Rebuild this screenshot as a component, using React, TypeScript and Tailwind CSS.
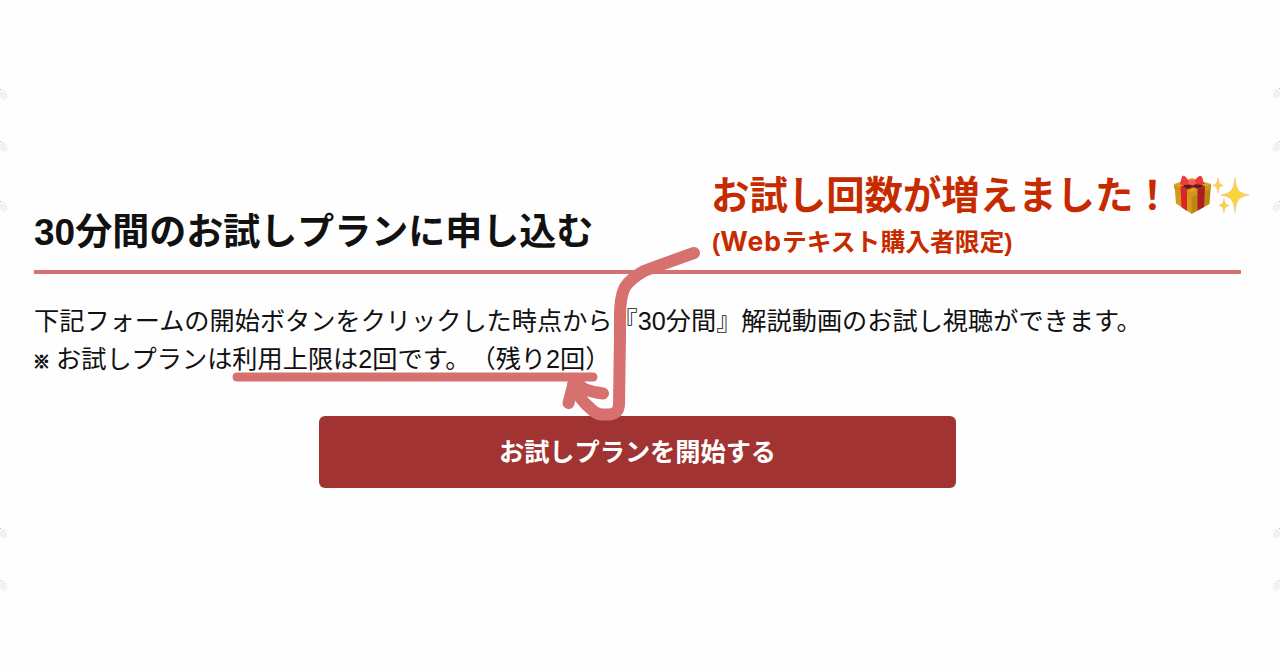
import { clsx } from "clsx";

const MARK = "#d6716f";

const specks = [
  { side: "left", top: "top-[89px]" },
  { side: "left", top: "top-[141px]" },
  { side: "left", top: "top-[201px]" },
  { side: "left", top: "top-[528px]" },
  { side: "left", top: "top-[580px]" },
  { side: "right", top: "top-[88px]" },
  { side: "right", top: "top-[141px]" },
  { side: "right", top: "top-[201px]" },
  { side: "right", top: "top-[528px]" },
  { side: "right", top: "top-[580px]" },
];

function Speck({ side, top }: { side: string; top: string }) {
  return (
    <svg
      width="9"
      height="13"
      viewBox="0 0 9 13"
      shapeRendering="crispEdges"
      className={clsx("absolute", top, side === "left" ? "left-0" : "right-0 -scale-x-100")}
    >
      <path d="M1 1h4v2h2v1h-1v1h2v1h-1v2h1v1h-2v1h-1v2h-1v-1h-1v-1h-1v-1h-2V3h1z" fill="#f5f1f1" />
      <rect width="1" height="1" fill="#bdb9b9" />
    </svg>
  );
}

function GiftIcon() {
  return (
    <svg width="40" height="40" viewBox="0 0 40 40" className="shrink-0">
      <path d="M2.500 10 20 17v22L4 28.500z" fill="#d49b18" />
      <path d="M19.500 17 39 9l-1.500 20L19.500 39z" fill="#bd8514" />
      <path d="M2 9 20 3l19 6-19.500 9z" fill="#dca41f" />
      <path d="M2 9l17.500 8.500L39 9v4.500l-19.500 8.500L2 13.500z" fill="#cf9619" />
      <path d="M8.500 11.500 15 15v21l-5.500-3.800z" fill="#d9252a" />
      <path d="M25.500 14.500 33 11l-1 21-6.500 3.500z" fill="#ac1d22" />
      <path d="M8.500 11.500 28 6l5 2.500L15 15zM13 7l5-1.500 15 5.500-7.500 3.500z" fill="#c82228" />
      <path d="M11 11c4-3 7-2 9 0 3-2 8-2 11 .5l-4 1.500-6-1.500-6 2z" fill="#42242b" />
      <path d="M18 9C15 2 12 0 10.500 1 9.500 3 8 7 8.500 9.500c3 1 7 .5 9.500-.5z" fill="#f0383d" />
      <path d="M22 8c2-6 6-8 7.500-6.500C31 3 31.500 6 31 9c-3 1-7 .5-9-1z" fill="#f0383d" />
      <path d="M16.500 5h6.500l1 4-3.500 1.500L16 9z" fill="#ff5858" />
    </svg>
  );
}

function SparklesIcon() {
  return (
    <svg width="38" height="38" viewBox="0 0 38 38" className="shrink-0" fill="#fbd43c" stroke="#efb98a" strokeWidth="0.6">
      <path d="M23 1.500c1.200 12.500 3.500 15.500 14 17.500-10.500 2-12.800 5-14 17.500C21.800 24 19.500 21 9 19c10.500-2 12.800-5 14-17.500z" />
      <path d="M6 2c.8 5 1.600 6.500 5 7.300C7.600 10.200 6.800 12 6 17 5.200 12 4.400 10.200 1 9.300 4.400 8.500 5.200 7 6 2z" />
      <path d="M12 22.500c.8 4.800 1.600 6 5 6.800-3.400.9-4.200 2.500-5 7.200-.8-4.700-1.600-6.300-5-7.200 3.400-.8 4.200-2 5-6.800z" />
    </svg>
  );
}

// Hand-drawn underline and arrow laid over the form
function Scribble() {
  return (
    <svg
      width="1280"
      height="670"
      viewBox="0 0 1280 670"
      fill="none"
      stroke={MARK}
      strokeLinecap="round"
      strokeLinejoin="round"
      className="pointer-events-none absolute top-0 left-0"
    >
      <path d="M237 377H593" strokeWidth="9" />
      <path
        d="M694 253C677 259 660 265 644 271C637 275 629 281 625 287C619 299 620 316 620 335L619 404Q619 414 609 414.500H601Q596 414 590 408Q580 400 573 385"
        strokeWidth="12"
      />
      <path d="M568.500 403L574 382Q582 391 603 393.500" strokeWidth="12" />
      <path d="M571 381h10l10 10-15 2z" fill={MARK} strokeWidth="4" />
    </svg>
  );
}

export default function App() {
  return (
    <div className="relative h-[670px] w-[1280px] overflow-hidden bg-[#fefefe] font-['Liberation_Sans','Noto_Sans_CJK_JP',sans-serif] text-[#111] [text-spacing-trim:space-all]">
      <main className="w-[1241px] pt-[172px] pl-[34px]">
        <header className="flex h-[102px] justify-between border-b-4 border-[#d6716f] whitespace-nowrap">
          <h1 className="mt-[39px] text-[37px] leading-[44px] font-bold">30分間のお試しプランに申し込む</h1>
          <div className="-mr-[9px] w-[538px] shrink-0 font-bold text-[#c62b00]">
            <div className="flex h-[46px] items-center text-[38.4px] leading-[46px]">
              <p className="mt-px -ml-px w-[461px]">お試し回数が増えました！</p>
              <GiftIcon />
              <SparklesIcon />
            </div>
            <p className="mt-[8px] text-[24.8px] leading-[34px]">
              (<span className="text-[26.500px] leading-none tracking-[1px] [font-family:Inter,sans-serif]">Web</span>テキスト購入者限定)
            </p>
          </div>
        </header>

        <p className="mt-[28px] text-[25.2px] leading-[38px] whitespace-nowrap">
          下記フォームの開始ボタンをクリックした時点から『30分間』解説動画のお試し視聴ができます。
          <br />
          <span className="mr-[6px] inline-block w-[16px] -indent-px text-[17px] leading-none [-webkit-text-stroke:1px_#111]">※</span>
          お試しプランは利用上限は2回です。（残り2回）
        </p>

        <button
          type="button"
          className="mt-[38px] ml-[285px] block h-[72px] w-[637px] rounded-md bg-[#a13432] pt-[2px] text-[25.2px] font-bold text-white"
        >
          お試しプランを開始する
        </button>
      </main>

      <Scribble />
      {specks.map((speck) => (
        <Speck key={speck.side + speck.top} {...speck} />
      ))}
    </div>
  );
}
